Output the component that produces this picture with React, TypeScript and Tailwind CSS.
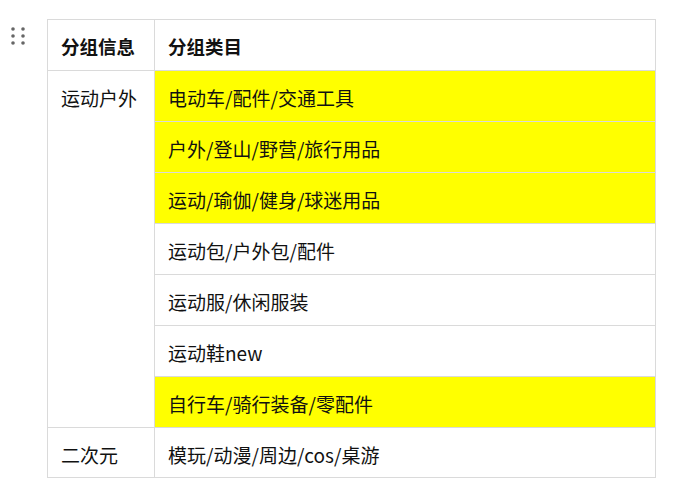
import React from "react";

const rows = [
  { name: "电动车/配件/交通工具", hl: true },
  { name: "户外/登山/野营/旅行用品", hl: true },
  { name: "运动/瑜伽/健身/球迷用品", hl: true },
  { name: "运动包/户外包/配件", hl: false },
  { name: "运动服/休闲服装", hl: false },
  { name: "运动鞋new", hl: false },
  { name: "自行车/骑行装备/零配件", hl: true },
];

const DragHandle = () => (
  <svg width="16" height="20" viewBox="0 0 16 20" className="text-[#666]">
    {[3, 10, 17].map((y) =>
      [3, 13].map((x) => <circle key={`${x}-${y}`} cx={x} cy={y} r="1.8" fill="currentColor" />)
    )}
  </svg>
);

const cell = "border border-[#dadada] px-[13px]";

const App = () => {
  return (
    <div
      className="flex w-[685px] h-[491px] bg-white pt-[19px] pl-[10px] text-[#111]"
      style={{ fontFamily: '"Microsoft YaHei", "Noto Sans CJK SC", sans-serif' }}
    >
      <div className="pt-[7px] w-[37px]">
        <DragHandle />
      </div>
      <table className="border-collapse w-[609px] table-fixed text-[19px] leading-[26px] self-start">
        <colgroup>
          <col className="w-[107px]" />
          <col />
        </colgroup>
        <thead>
          <tr>
            <th className={`${cell} h-[51px] pt-[2px] text-left font-bold text-[18.5px]`}>分组信息</th>
            <th className={`${cell} h-[51px] pt-[2px] text-left font-bold text-[18.5px]`}>分组类目</th>
          </tr>
        </thead>
        <tbody>
          {rows.map((r, i) => (
            <tr key={r.name}>
              {i === 0 && (
                <td rowSpan={rows.length} className={`${cell} pt-[14px] align-top`}>
                  运动户外
                </td>
              )}
              <td className={`${cell} h-[51px] pt-[4px] ${r.hl ? "bg-[#ffff00]" : ""}`}>
                {r.name}
              </td>
            </tr>
          ))}
          <tr>
            <td className={`${cell} h-[50px] pt-[4px]`}>二次元</td>
            <td className={`${cell} h-[50px] pt-[4px]`}>模玩/动漫/周边/cos/桌游</td>
          </tr>
        </tbody>
      </table>
    </div>
  );
};

export default App;
